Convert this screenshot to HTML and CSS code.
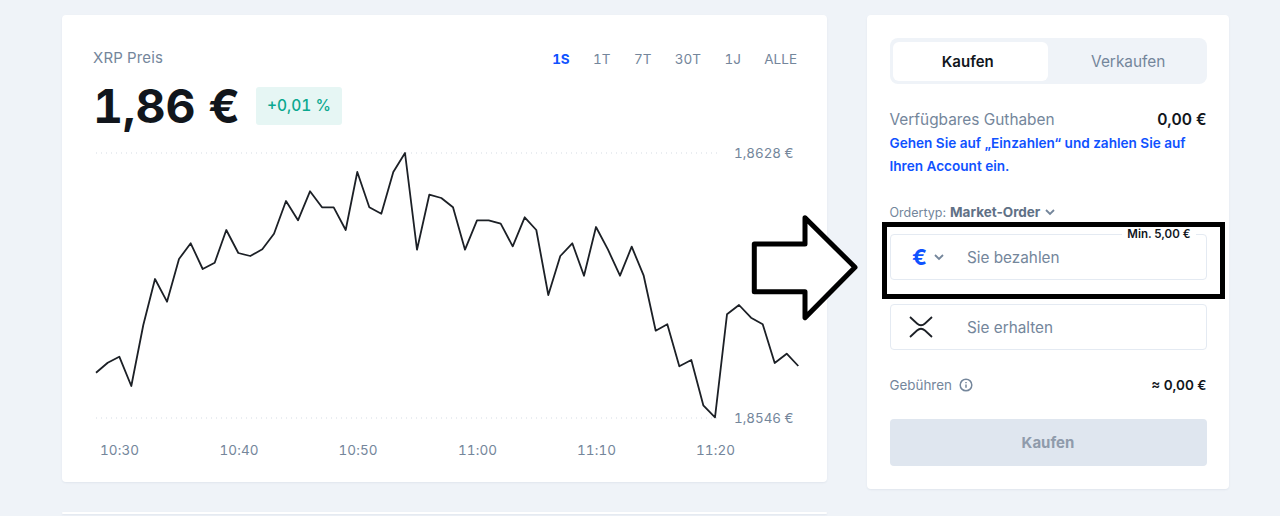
FILE: index.html
```html
<!DOCTYPE html>
<html lang="de">
<head>
    <meta charset="UTF-8">
    <meta name="viewport" content="width=device-width, initial-scale=1.0">
    <title>XRP Preis</title>
    <link rel="stylesheet" href="styles.css">
</head>
<body>
    <div class="page">
        <div class="left-col">
            <div class="card chart-card">
                <div class="chart-head">
                    <span class="chart-title">XRP Preis</span>
                    <div class="ranges">
                        <span class="range active">1S</span>
                        <span class="range">1T</span>
                        <span class="range">7T</span>
                        <span class="range">30T</span>
                        <span class="range">1J</span>
                        <span class="range">ALLE</span>
                    </div>
                </div>
                <div class="price-row">
                    <span class="price">1,86 €</span>
                    <span class="change">+0,01 %</span>
                </div>
                <!-- viewBox uses page coordinates, easier to read the points off -->
                <svg class="chart" width="710" height="330" viewBox="93 140 710 330">
                    <line class="grid" x1="96" y1="153" x2="720" y2="153"></line>
                    <line class="grid" x1="96" y1="418" x2="720" y2="418"></line>
                    <polyline class="price-line" points="96,372.7 107.7,362.7 119.3,356.7 131.3,386 143.3,325 155,279 167,301.7 179,259 190.7,243.3 202.7,269 214.7,262.7 226.3,230 238.3,253 250.3,256 262.3,249.3 274,233.7 286,201 298,220.3 310,191.3 322,207.3 333.7,207.3 345.7,230 357.3,172 369.3,207.3 381.3,213.7 393.3,172 405,153 417,249.7 429.3,194.7 441.3,198 453,207.3 465,249.7 477,220.3 488.7,220.3 500.7,223.7 512.7,246.3 524.7,217.3 536.3,230 548.3,295 560.3,256 572.3,243.3 584,275.7 596,227 608,249.7 620,275.7 631.7,246.7 643.7,275.7 655.7,330.7 667.3,324.3 679.3,366.3 691.3,360 703.3,405.3 715,417.3 727,314.3 739,305 751,317.7 762.7,324.3 774.7,363 786.7,353.7 798.3,366"></polyline>
                    <text class="axis" x="734" y="157.5">1,8628 €</text>
                    <text class="axis" x="734" y="422.5">1,8546 €</text>
                    <text class="axis time" x="100" y="455">10:30</text>
                    <text class="axis time" x="219.500" y="455">10:40</text>
                    <text class="axis time" x="338.500" y="455">10:50</text>
                    <text class="axis time" x="458" y="455">11:00</text>
                    <text class="axis time" x="577" y="455">11:10</text>
                    <text class="axis time" x="696" y="455">11:20</text>
                </svg>
            </div>
            <div class="card next-card"></div>
        </div>

        <div class="card trade-card">
            <div class="tabs">
                <div class="tab active">Kaufen</div>
                <div class="tab">Verkaufen</div>
            </div>

            <div class="row balance">
                <span class="row-label">Verfügbares Guthaben</span>
                <span class="row-value">0,00 €</span>
            </div>
            <p class="deposit-note">Gehen Sie auf „Einzahlen“ und zahlen Sie auf Ihren Account ein.</p>

            <div class="order-type">
                Ordertyp: <strong>Market-Order</strong>
                <svg class="chevron" width="12" height="12" viewBox="0 0 12 12"><path d="M2 4l4 4 4-4"></path></svg>
            </div>

            <div class="field pay-field">
                <span class="min-label">Min. 5,00 €</span>
                <span class="field-icon">
                    <span class="euro">€</span>
                    <svg class="chevron" width="12" height="12" viewBox="0 0 12 12"><path d="M2 4l4 4 4-4"></path></svg>
                </span>
                <span class="field-text">Sie bezahlen</span>
            </div>
            <div class="field">
                <span class="field-icon">
                    <svg class="xrp" width="24" height="22" viewBox="0 0 24 22"><path d="M1 1L8 7.500Q12 11.100 16 7.500L23 1M1 21L8 14.500Q12 10.900 16 14.500L23 21"></path></svg>
                </span>
                <span class="field-text">Sie erhalten</span>
            </div>

            <div class="row fees">
                <span class="fee-label">
                    Gebühren
                    <svg class="info" width="14" height="14" viewBox="0 0 14 14">
                        <circle cx="7" cy="7" r="5.800"></circle>
                        <path d="M7 6.400v3.400M7 4v1.200"></path>
                    </svg>
                </span>
                <span class="row-value fee-value">≈ 0,00 €</span>
            </div>

            <button class="buy-btn">Kaufen</button>
        </div>
    </div>

    <!-- annotation drawn on top of the screenshot -->
    <svg class="mark-arrow" width="120" height="120" viewBox="745 210 120 120">
        <path d="M754.300 244H805V217.700L855 267.300 805 317.700V291.700H754.300Z"></path>
    </svg>
    <div class="mark-box"></div>
</body>
</html>
```

FILE: styles.css
```css
:root {
    --bg: #eff3f8;
    --muted: #74869b;
    --dark: #11161c;
    --blue: #0f52ff;
    --line: #e4eaf2;
}

html, body {
    height: 516px;
    overflow: hidden;
}

body {
    margin: 0;
    background-color: var(--bg);
    color: var(--dark);
    font-family: Inter, 'Liberation Sans', sans-serif;
}

.page {
    display: flex;
    gap: 40px;
    padding: 15px 0 0 62px;
    align-items: flex-start;
}

.left-col {
    width: 765px;
}

.card {
    background-color: #fff;
    border-radius: 4px;
    box-shadow: 0 1px 2px rgba(60, 80, 110, 0.08);
}

/* Chart card */
.chart-card {
    height: 467px;
    box-sizing: border-box;
    padding: 33px 30px 0 31px;
    font-variant-numeric: tabular-nums;
}

.next-card {
    height: 2px;
    margin-top: 30px;
}

.chart-head {
    display: flex;
    justify-content: space-between;
    align-items: center;
    height: 18px;
}

.chart-title {
    font-size: 15px;
    letter-spacing: 0.15px;
    color: var(--muted);
}

.ranges {
    display: flex;
    gap: 23.400px;
    margin-top: 3px;
}

.range {
    font-size: 13.500px;
    color: var(--muted);
}

.range.active {
    color: var(--blue);
    font-weight: 700;
}

.price-row {
    display: flex;
    align-items: center;
    gap: 15.500px;
    margin-top: 21px;
    height: 38px;
}

.price {
    font-size: 46.500px;
    font-weight: 700;
    line-height: 38px;
}

.change {
    display: block;
    padding: 0 11.500px;
    line-height: 38px;
    font-size: 15.500px;
    font-weight: 500;
    color: #0aa88f;
    background-color: #e6f6f4;
    border-radius: 3px;
}

.chart {
    display: block;
    margin-top: 15px;
}

.grid {
    stroke: #d5dbe3;
    stroke-dasharray: 1 4;
}

.price-line {
    fill: none;
    stroke: #1c2026;
    stroke-width: 1.800;
    stroke-linejoin: round;
}

.axis {
    font-size: 13.400px;
    fill: var(--muted);
}

.time {
    font-size: 13.500px;
    letter-spacing: 0.1px;
}

/* Trade card */
.trade-card {
    width: 362px;
    height: 474px;
    box-sizing: border-box;
    padding: 23px 22.500px 0;
}

.tabs {
    display: flex;
    height: 46px;
    box-sizing: border-box;
    padding: 3.500px;
    background-color: var(--bg);
    border-radius: 8px;
}

.tab {
    flex: 1;
    display: flex;
    align-items: center;
    justify-content: center;
    font-size: 15.400px;
    padding-left: 6px;
    color: var(--muted);
    border-radius: 6px;
}

.tab.active {
    padding: 0 5px 0 0;
    background-color: #fff;
    color: var(--dark);
    font-size: 15px;
    font-weight: 600;
}

.row {
    display: flex;
    justify-content: space-between;
    align-items: center;
}

.balance {
    margin-top: 25px;
    height: 20px;
}

.row-label {
    font-size: 15.400px;
    color: var(--muted);
}

.row-value {
    font-size: 15.500px;
    font-weight: 600;
}

.deposit-note {
    margin: 3px 0 0;
    font-size: 13.600px;
    font-weight: 600;
    line-height: 23px;
    color: var(--blue);
    max-width: 300px;
}

.order-type {
    display: flex;
    align-items: center;
    gap: 4px;
    margin-top: 26px;
    height: 16px;
    font-size: 12.500px;
    color: var(--muted);
}

.order-type strong {
    font-size: 13.500px;
    font-weight: 700;
    color: #5f7186;
}

.chevron path {
    fill: none;
    stroke: var(--muted);
    stroke-width: 1.800;
}

.field {
    position: relative;
    display: flex;
    align-items: center;
    height: 46px;
    box-sizing: border-box;
    border: 1px solid var(--line);
    border-radius: 4px;
    margin-bottom: 24px;
}

.pay-field {
    margin-top: 14px;
}

.field-icon {
    display: flex;
    align-items: center;
    gap: 6px;
    width: 76.500px;
    padding-left: 18px;
    box-sizing: border-box;
}

.euro {
    margin-left: 3.500px;
    font-size: 22px;
    font-weight: 700;
    line-height: 1;
    color: var(--blue);
}

.xrp path {
    fill: none;
    stroke: #1c2026;
    stroke-width: 1.800;
}

.field-text {
    font-size: 15.300px;
    color: var(--muted);
}

.min-label {
    position: absolute;
    right: 10px;
    top: -7px;
    padding: 0 5px;
    font-size: 11.500px;
    font-weight: 600;
    line-height: 13px;
    color: var(--dark);
    background-color: #fff;
}

.fees {
    margin-top: 25px;
    height: 20px;
}

.fee-label {
    display: flex;
    align-items: center;
    gap: 7px;
    font-size: 13.400px;
    color: var(--muted);
}

.info circle,
.info path {
    fill: none;
    stroke: var(--muted);
    stroke-width: 1.500;
}

.fee-value {
    font-size: 13.500px;
}

.buy-btn {
    display: block;
    width: 100%;
    height: 47px;
    margin-top: 24px;
    border: none;
    border-radius: 4px;
    background-color: #dfe6ef;
    color: #8f9bab;
    font-family: inherit;
    font-size: 15px;
    font-weight: 700;
}

/* Annotation */
.mark-arrow {
    position: absolute;
    left: 745px;
    top: 210px;
}

.mark-arrow path {
    fill: #fff;
    stroke: #000;
    stroke-width: 5;
    stroke-linejoin: round;
}

.mark-box {
    position: absolute;
    left: 882px;
    top: 222px;
    width: 343px;
    height: 77px;
    box-sizing: border-box;
    border: 5px solid #000;
}
```
